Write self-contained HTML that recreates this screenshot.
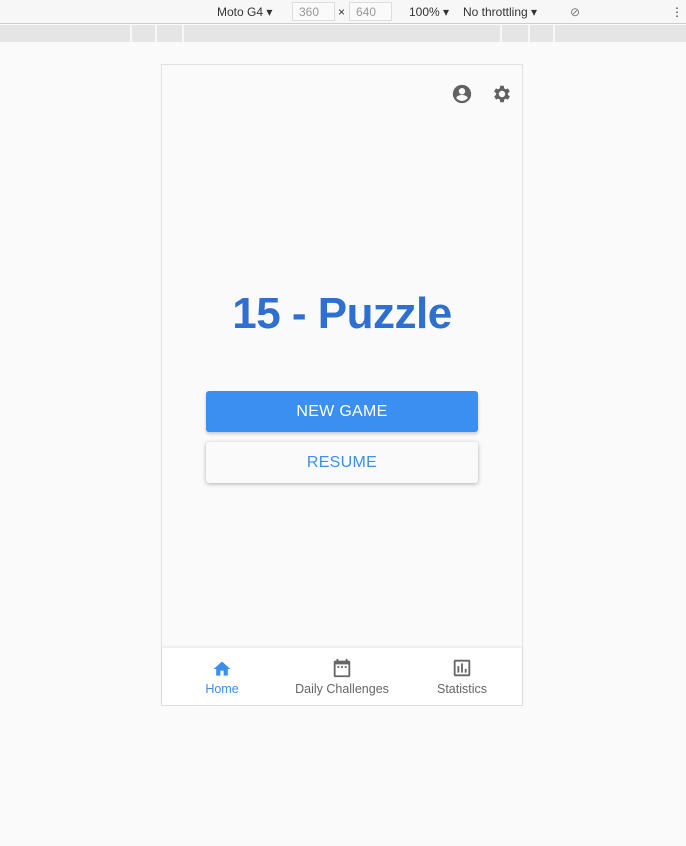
<!DOCTYPE html>
<html><head><style>
*{margin:0;padding:0;box-sizing:border-box}
body{width:686px;height:846px;background:#fafafa;font-family:"Liberation Sans",sans-serif;position:relative;overflow:hidden}
.top{position:absolute;left:0;top:0;width:686px;height:24px;background:#f7f7f7;border-bottom:1px solid #ccc;font-size:12px;color:#333}
.top span{position:absolute;top:5px}
.inp{position:absolute;top:2px;height:19px;border:1px solid #ddd;background:#fafafa;color:#999;font-size:12px;padding:2px 6px}
.ruler{position:absolute;left:0;top:25px;width:686px;height:17px;background:#e5e5e5}
.ruler i{position:absolute;top:0;width:2px;height:17px;background:#f7f7f7}
.phone{position:absolute;left:161px;top:64px;width:362px;height:642px;border:1px solid #e0e0e0;background:#fafafa}
h1{position:absolute;left:0;width:360px;top:224px;text-align:center;font-size:44px;font-weight:bold;color:#2f6fd0;letter-spacing:-0.5px}
.btn{position:absolute;left:44px;width:272px;height:41px;border-radius:3px;text-align:center;line-height:41px;font-size:16px;letter-spacing:.3px}
.nav{position:absolute;left:0;bottom:0;width:360px;height:57px;background:#fff;box-shadow:0 -1px 3px rgba(0,0,0,.08)}
.nav div{position:absolute;top:34px;font-size:12.5px;color:#666;text-align:center}
</style></head><body>
<div class="top">
<span style="left:217px">Moto G4 ▾</span>
<div class="inp" style="left:292px;width:43px">360</div><span style="left:338px">×</span>
<div class="inp" style="left:349px;width:43px">640</div>
<span style="left:409px">100% ▾</span><span style="left:463px">No throttling ▾</span>
<span style="left:570px;color:#777">⊘</span><span style="left:671px">⋮</span>
</div>
<div class="ruler"><i style="left:130px"></i><i style="left:155px"></i><i style="left:182px"></i><i style="left:500px"></i><i style="left:528px"></i><i style="left:553px"></i></div>
<div class="phone">
<svg style="position:absolute;left:289px;top:18px" width="22" height="22" viewBox="0 0 24 24"><path fill="#616161" d="M12 2A10 10 0 1 0 12 22A10 10 0 1 0 12 2zM12 5.5a3.5 3.5 0 1 1 0 7a3.5 3.5 0 1 1 0-7zM12 19.5c-2.6 0-4.9-1.3-6.2-3.3c.1-2 4.1-3.1 6.2-3.1s6.1 1.1 6.2 3.1c-1.3 2-3.6 3.3-6.2 3.3z"/></svg>
<svg style="position:absolute;left:329px;top:18px" width="22" height="22" viewBox="0 0 24 24"><path fill="#616161" d="M19.4 13a7.5 7.5 0 0 0 0-2l2.1-1.6-2-3.5-2.5 1a7 7 0 0 0-1.7-1L15 3h-4l-.4 2.9a7 7 0 0 0-1.7 1l-2.5-1-2 3.5L6.6 11a7.5 7.5 0 0 0 0 2l-2.1 1.6 2 3.5 2.5-1a7 7 0 0 0 1.7 1L11 21h4l.4-2.9a7 7 0 0 0 1.7-1l2.5 1 2-3.5zM13 15.5a3.5 3.5 0 1 1 0-7a3.5 3.5 0 0 1 0 7z" transform="translate(-1 0)"/></svg>
<h1>15 - Puzzle</h1>
<div class="btn" style="top:326px;background:#3a8ff0;color:#fff;box-shadow:0 2px 3px rgba(0,0,0,.2)">NEW GAME</div>
<div class="btn" style="top:377px;background:#fafafa;color:#3a8ff0;box-shadow:0 1px 4px rgba(0,0,0,.3)">RESUME</div>
<div class="nav">
<svg style="position:absolute;left:50px;top:11px" width="20" height="20" viewBox="0 0 24 24"><path fill="#3a8ff0" d="M10 20v-6h4v6h5v-8h3L12 3 2 12h3v8z"/></svg>
<svg style="position:absolute;left:169px;top:9px" width="22" height="22" viewBox="0 0 24 24"><path fill="#666" d="M19 4h-1V2h-2v2H8V2H6v2H5a2 2 0 0 0-2 2v14a2 2 0 0 0 2 2h14a2 2 0 0 0 2-2V6a2 2 0 0 0-2-2zm0 16H5V8h14zM7 10h2v2H7zm4 0h2v2h-2zm4 0h2v2h-2z"/></svg>
<svg style="position:absolute;left:289px;top:9px" width="22" height="22" viewBox="0 0 24 24"><path fill="#666" d="M19 3H5a2 2 0 0 0-2 2v14a2 2 0 0 0 2 2h14a2 2 0 0 0 2-2V5a2 2 0 0 0-2-2zm0 16H5V5h14zM7 10h2v7H7zm4-3h2v10h-2zm4 6h2v4h-2z"/></svg>
<div style="left:30px;width:60px;color:#3a8ff0">Home</div>
<div style="left:120px;width:120px">Daily Challenges</div>
<div style="left:260px;width:80px">Statistics</div>
</div>
</div>
</body></html>
